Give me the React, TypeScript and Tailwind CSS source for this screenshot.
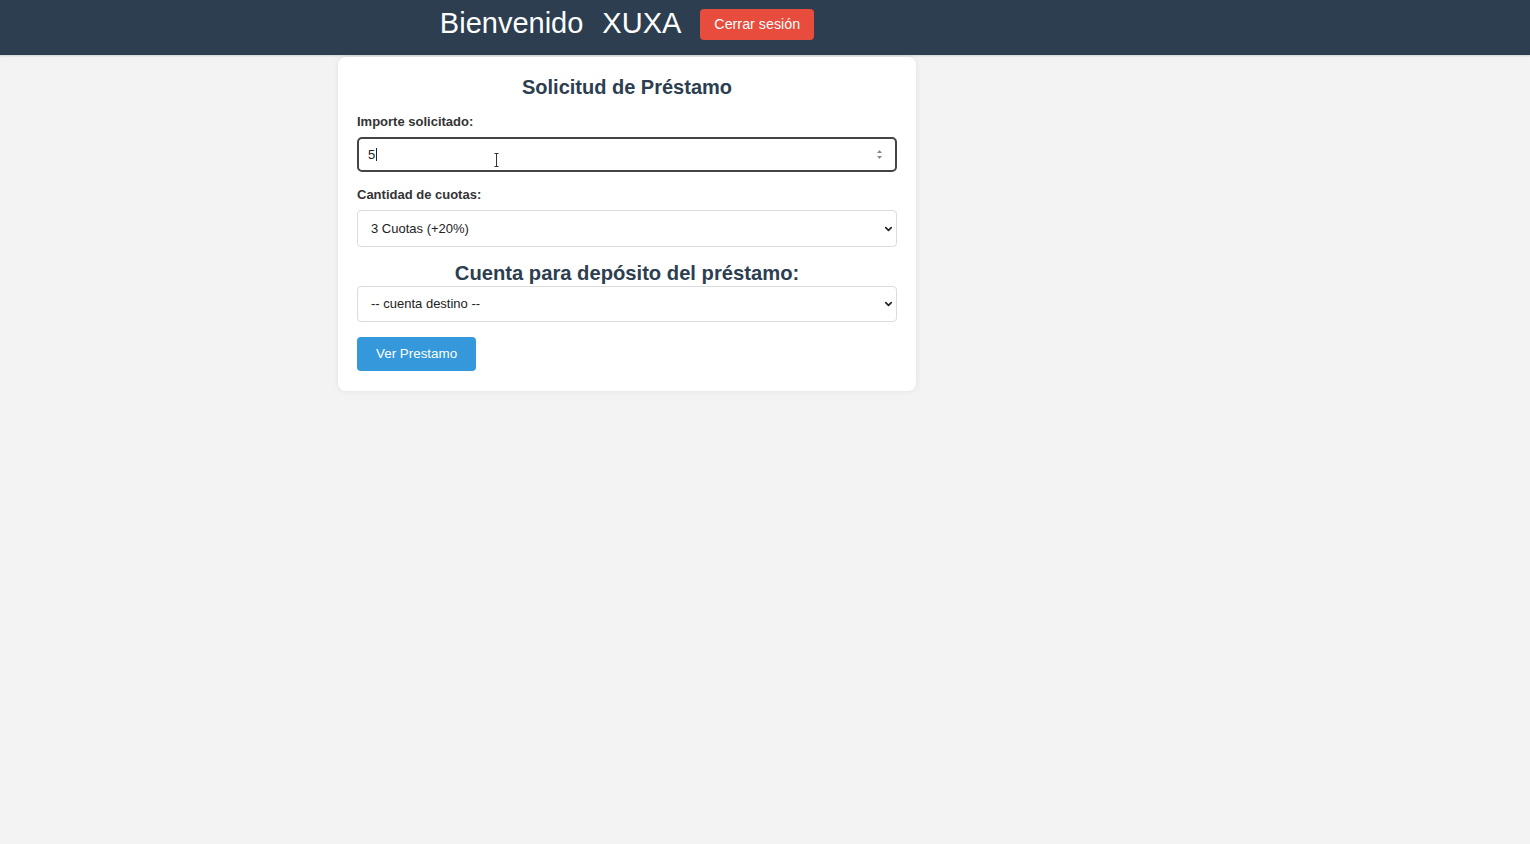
import { ChevronDown } from 'lucide-react'

const FONT = { fontFamily: '"Liberation Sans", Arial, sans-serif' }

export default function App() {
  return (
    <div className="min-h-screen w-full bg-[#f3f3f3]" style={FONT}>
      {/* Top bar */}
      <header className="h-[55px] bg-[#2c3e50] shadow-[0_1px_2px_rgba(0,0,0,0.15)]">
        <div className="ml-[338px] flex h-full w-[578px] items-center justify-center gap-[19px] pb-[8px]">
          <h1 className="flex gap-[19px] text-[29px] leading-none text-white">
            <span>Bienvenido</span>
            <span>XUXA</span>
          </h1>
          <button className="mt-[2px] h-[31px] rounded-[4px] bg-[#e74c3c] px-[14px] text-[14.3px] text-white">
            Cerrar sesión
          </button>
        </div>
      </header>

      {/* Loan form card */}
      <main className="ml-[338px] mt-[2px] w-[578px] rounded-[8px] bg-white px-[19px] pb-[20px] pt-[19px] shadow-[0_0_6px_rgba(0,0,0,0.08)]">
        <h2 className="text-center text-[20px] font-bold leading-[23px] text-[#2c3e50]">
          Solicitud de Préstamo
        </h2>

        <label className="mt-[15px] block text-[13px] font-bold leading-[15px] text-[#333]">
          Importe solicitado:
        </label>
        <div className="relative mt-[8px]">
          <div className="flex h-[35px] w-full items-center rounded-[5px] border-2 border-[#444] bg-white px-[9px] text-[13px] text-[#222]">
            <span>5</span>
            <span className="ml-[1px] h-[13px] w-px bg-[#222]" />
          </div>
          <svg
            className="absolute right-[14px] top-[12px]"
            width="7"
            height="11"
            viewBox="0 0 7 11"
          >
            <path d="M3.5 1 L6 4 L1 4 Z" fill="#888" />
            <path d="M3.5 10 L6 7 L1 7 Z" fill="#888" />
          </svg>
          <svg
            className="absolute left-[137px] top-[16px]"
            width="5"
            height="14"
            viewBox="0 0 5 14"
          >
            <path d="M0.5 0.5 H4.5 M2.5 0.5 V13.5 M0.5 13.5 H4.5" stroke="#333" strokeWidth="1" fill="none" />
          </svg>
        </div>

        <label className="mt-[15px] block text-[13px] font-bold leading-[15px] text-[#333]">
          Cantidad de cuotas:
        </label>
        <SelectBox value="3 Cuotas (+20%)" className="mt-[8px] h-[37px]" />

        <h3 className="mt-[15px] text-center text-[20.2px] font-bold leading-[23px] text-[#2c3e50]">
          Cuenta para depósito del préstamo:
        </h3>
        <SelectBox value="-- cuenta destino --" className="mt-[1px] h-[36px]" />

        <button className="mt-[15px] h-[34px] rounded-[4px] bg-[#3498db] px-[19px] text-[13.4px] text-white">
          Ver Prestamo
        </button>
      </main>
    </div>
  )
}

function SelectBox({ value, className = '' }: { value: string; className?: string }) {
  return (
    <div className={`relative ${className}`}>
      <select className="h-full w-full appearance-none rounded-[4px] border border-[#dcdcdc] bg-white pl-[13px] text-[13px] text-[#222] outline-none">
        <option>{value}</option>
      </select>
      <ChevronDown
        className="pointer-events-none absolute right-[3px] top-1/2 -translate-y-1/2 text-[#222]"
        size={11}
        strokeWidth={3.5}
      />
    </div>
  )
}
